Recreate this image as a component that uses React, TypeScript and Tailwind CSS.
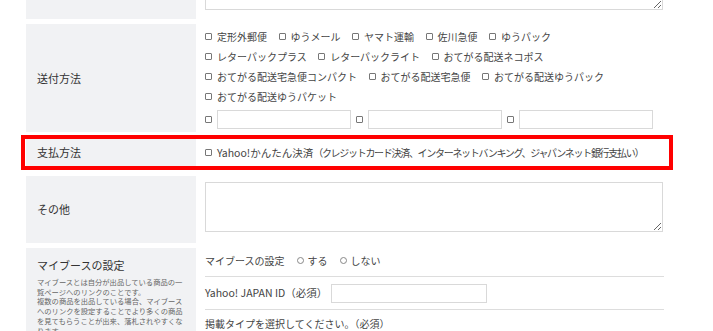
import React from 'react';

const Box = () => (
  <span className="inline-block w-[7px] h-[7px] border border-[#777] rounded-[1px] bg-white mr-[5px] shrink-0" />
);

const Radio = () => (
  <span className="inline-block w-[7px] h-[7px] border border-[#888] rounded-full bg-white mr-[4px] shrink-0" />
);

const Opt = ({ label, last }: { label: string; last?: boolean }) => (
  <span className={`flex items-center ${last ? '' : 'mr-[11.5px]'}`}>
    <Box />
    <span>{label}</span>
  </span>
);

const shippingRows = [
  ['定形外郵便', 'ゆうメール', 'ヤマト運輸', '佐川急便', 'ゆうパック'],
  ['レターパックプラス', 'レターパックライト', 'おてがる配送ネコポス'],
  ['おてがる配送宅急便コンパクト', 'おてがる配送宅急便', 'おてがる配送ゆうパック'],
  ['おてがる配送ゆうパケット'],
];

function Label({ children }: { children: React.ReactNode }) {
  return (
    <div className="w-[170px] shrink-0 bg-[#f1f2f4] flex items-center pl-[11px] text-[11px] text-[#333]">
      {children}
    </div>
  );
}

export default function App() {
  return (
    <div className="w-[713px] h-[331px] overflow-hidden bg-white font-['Noto_Sans_CJK_JP',sans-serif] text-[#444]">
      <div className="ml-[26px] w-[642px] -mt-[46px]">
        {/* 前の項目（テキストエリア） */}
        <div className="flex mb-[5px]">
          <Label>{''}</Label>
          <div className="flex-1 pl-[9px] pt-[6px] pb-[9px]">
            <textarea className="block w-[458px] h-[50px] border border-[#d9d9d9] bg-white" />
          </div>
        </div>

        {/* 送付方法 */}
        <div className="flex">
          <Label>送付方法</Label>
          <div className="flex-1 pl-[9px] pt-[2px] pb-[3px] text-[10px]">
            {shippingRows.map((row, i) => (
              <div key={i} className="flex items-center h-[20px]">
                {row.map((l, j) => (
                  <Opt key={l} label={l} last={j === row.length - 1} />
                ))}
              </div>
            ))}
            <div className="flex items-center mt-[4px]">
              {[0, 1, 2].map((i) => (
                <span key={i} className="flex items-center mr-[5px]">
                  <Box />
                  <input className="w-[134px] h-[19px] border border-[#d9d9d9] bg-white" />
                </span>
              ))}
            </div>
          </div>
        </div>

        {/* 支払方法 */}
        <div className="-ml-[5px] w-[652px] mt-[3px] mb-[6px] border-4 border-[#ff0000] pl-px">
          <div className="flex h-[27px]">
            <Label>支払方法</Label>
            <div className="flex-1 pl-[9px] flex items-center text-[10px] whitespace-nowrap">
              <Box />
              <span className="text-[10.5px]">Yahoo!かんたん決済</span>
              <span className="tracking-[-1.3px]">（クレジットカード決済、インターネットバンキング、ジャパンネット銀行支払い）</span>
            </div>
          </div>
        </div>

        {/* その他 */}
        <div className="flex mb-[5px]">
          <Label>その他</Label>
          <div className="flex-1 pl-[9px] pt-[6px] pb-[11px]">
            <textarea className="block w-[458px] h-[50px] border border-[#d9d9d9] bg-white" />
          </div>
        </div>

        {/* マイブースの設定 */}
        <div className="flex">
          <div className="w-[170px] shrink-0 bg-[#f1f2f4] px-[11px] pt-[9px] pb-[10px] text-[#333]">
            <div className="text-[11px] leading-[16px]">マイブースの設定</div>
            <div className="mt-[5px] w-[148px] text-[7.3px] leading-[9.7px] text-[#666]">
              <p>マイブースとは自分が出品している商品の一覧ページへのリンクのことです。</p>
              <p>複数の商品を出品している場合、マイブースへのリンクを設定することでより多くの商品を見てもらうことが出来、落札されやすくなります。</p>
            </div>
          </div>
          <div className="flex-1 pl-[9px] pr-[4px] text-[10px]">
            <div className="h-[29px] border-b border-[#ddd] pt-[4px] flex items-start">
              <div className="flex items-center h-[16px]">
                <span className="mr-[12px]">マイブースの設定</span>
                <Radio />
                <span className="mr-[12px]">する</span>
                <Radio />
                <span>しない</span>
              </div>
            </div>
            <div className="h-[33px] border-b border-[#ddd] flex items-center">
              <span className="mr-[4px] text-[10.5px]">Yahoo! JAPAN ID（必須）</span>
              <input className="w-[156px] h-[19px] border border-[#d9d9d9] bg-white" />
            </div>
            <div className="pt-[6px] leading-[16px]">掲載タイプを選択してください。（必須）</div>
          </div>
        </div>
      </div>
    </div>
  );
}
